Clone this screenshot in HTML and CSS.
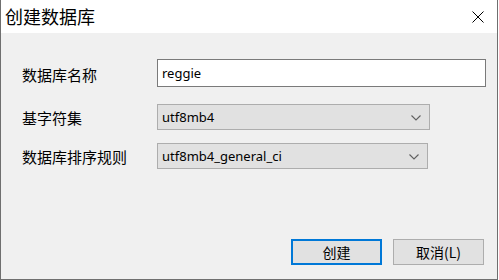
FILE: index.html
```html
<!DOCTYPE html>
<html lang="zh-CN">
<head>
<meta charset="utf-8">
<title>创建数据库</title>
<link rel="stylesheet" href="styles.css">
</head>
<body>
<div class="window">
  <div class="titlebar">
    <span class="title">创建数据库</span>
    <span class="close">
      <svg width="12" height="12" viewBox="0 0 12 12"><path d="M0.5 0.5 L11.5 11.5 M11.5 0.5 L0.5 11.5" stroke="#000" stroke-width="1" fill="none"/></svg>
    </span>
  </div>
  <div class="content">
    <div class="row row-name">
      <span class="label">数据库名称</span>
      <div class="input">reggie</div>
    </div>
    <div class="row row-charset">
      <span class="label">基字符集</span>
      <div class="select select-charset">
        <span class="value">utf8mb4</span>
        <svg class="chev" width="10" height="6" viewBox="0 0 10 6"><path d="M0.5 0.5 L5 5 L9.5 0.5" stroke="#606060" stroke-width="1.1" fill="none"/></svg>
      </div>
    </div>
    <div class="row row-collation">
      <span class="label">数据库排序规则</span>
      <div class="select select-collation">
        <span class="value">utf8mb4_general_ci</span>
        <svg class="chev" width="10" height="6" viewBox="0 0 10 6"><path d="M0.5 0.5 L5 5 L9.5 0.5" stroke="#606060" stroke-width="1.1" fill="none"/></svg>
      </div>
    </div>
    <div class="buttons">
      <button class="btn btn-primary">创建</button>
      <button class="btn">取消(L)</button>
    </div>
  </div>
</div>
</body>
</html>
```
FILE: styles.css
```css
html, body {
  margin: 0;
  padding: 0;
  background: #ffffff;
}
body {
  width: 499px;
  height: 280px;
  overflow: hidden;
  font-family: "Noto Sans CJK SC", "Noto Sans", sans-serif;
}
.window {
  box-sizing: border-box;
  width: 498px;
  height: 280px;
  border-left: 1px solid #6f6f6f;
  border-right: 1px solid #6f6f6f;
  border-bottom: 1px solid #6f6f6f;
  display: flex;
  flex-direction: column;
}
.titlebar {
  height: 33px;
  background: #ffffff;
  display: flex;
  align-items: center;
  justify-content: space-between;
  flex-shrink: 0;
}
.title {
  font-size: 18px;
  color: #000;
  padding-left: 4px;
  line-height: 1;
  margin-top: -1px;
}
.close {
  display: flex;
  margin-right: 13px;
  margin-top: 1px;
}
.content {
  flex: 1;
  background: #f0f0f0;
  padding: 26px 0 0 21px;
  display: flex;
  flex-direction: column;
}
.row {
  display: flex;
  align-items: center;
}
.label {
  width: 135px;
  font-size: 15px;
  color: #000;
  line-height: 1;
}
.row-name .label {
  margin-top: 3px;
}
.input {
  box-sizing: border-box;
  width: 329px;
  height: 28px;
  background: #fff;
  border: 1px solid #7a7a7a;
  font-family: "Noto Sans", sans-serif;
  font-size: 13px;
  color: #000;
  padding-left: 4px;
  display: flex;
  align-items: center;
}
.row-charset {
  margin-top: 17px;
}
.row-collation {
  margin-top: 13px;
}
.select {
  box-sizing: border-box;
  height: 26px;
  background: #e1e1e1;
  border: 1px solid #adadad;
  display: flex;
  align-items: center;
  justify-content: space-between;
  padding: 0 8px 0 4px;
  font-family: "Noto Sans", sans-serif;
  font-size: 13px;
  color: #000;
}
.select-charset {
  width: 273px;
}
.select-collation {
  width: 271px;
}
.chev {
  margin-top: 1px;
}
.buttons {
  margin-top: 70px;
  display: flex;
  gap: 11px;
  padding-left: 269px;
}
.btn {
  box-sizing: border-box;
  width: 91px;
  height: 26px;
  background: #e1e1e1;
  border: 1px solid #adadad;
  font-family: "Noto Sans CJK SC", "Noto Sans", sans-serif;
  font-size: 14px;
  color: #000;
  padding: 0;
  line-height: 1;
  display: flex;
  align-items: center;
  justify-content: center;
}
.btn-primary {
  border: 2px solid #0078d7;
}
```
